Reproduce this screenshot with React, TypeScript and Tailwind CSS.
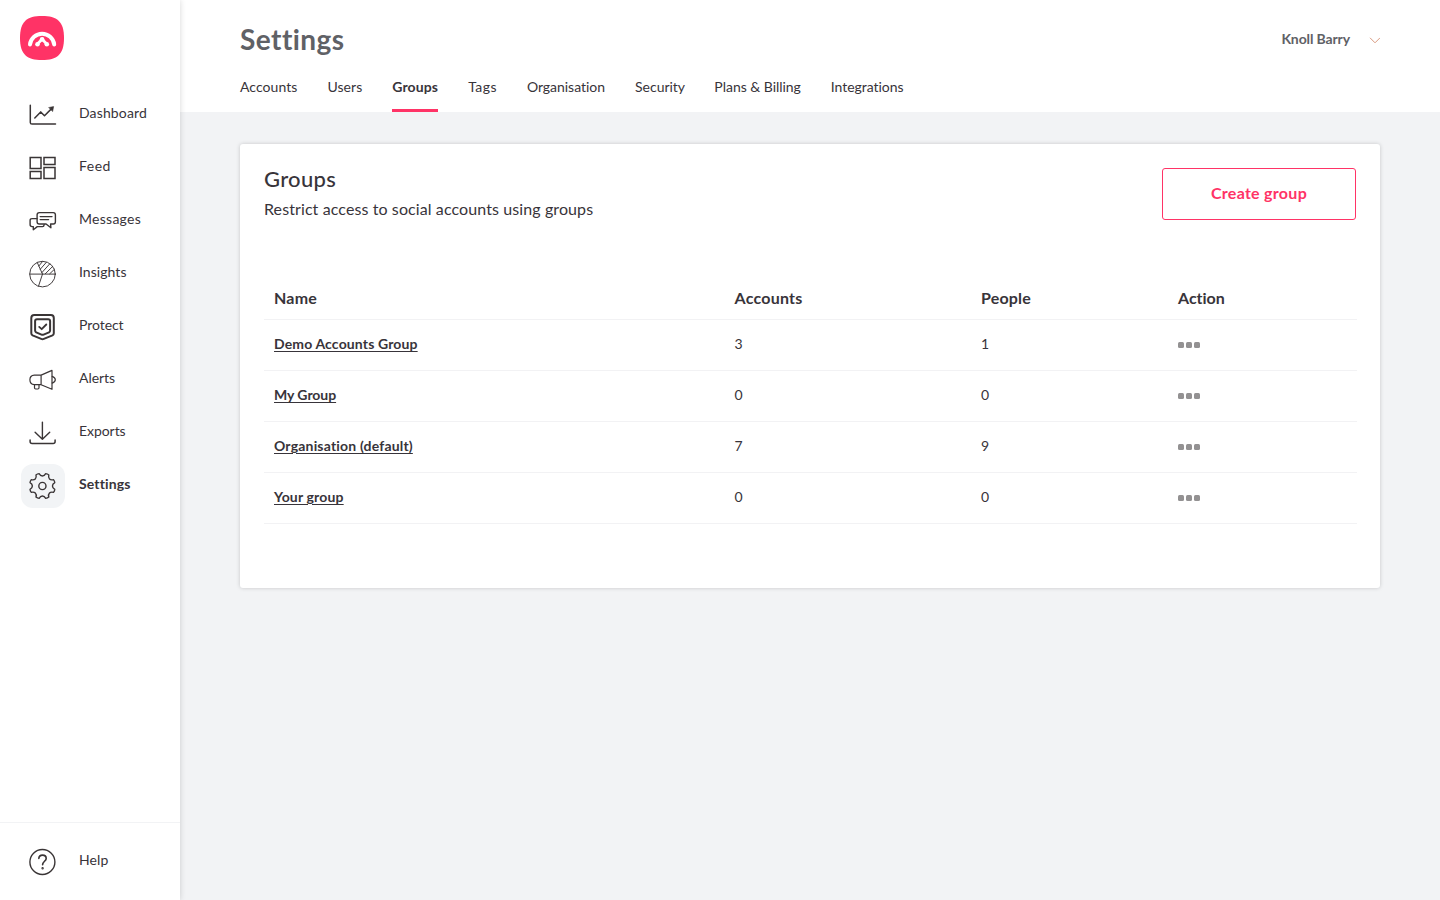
import type { ReactNode } from "react";

type NavItem = { label: string; icon: ReactNode; tracking: string; active?: boolean };
type Group = { name: string; accounts: number; people: number; tracking: string };

function Icon({ children }: { children: ReactNode }) {
  return (
    <svg
      className="mr-px overflow-visible"
      width="27"
      height="27"
      viewBox="-0.3 0.4 27 27"
      fill="none"
      stroke="#3a3536"
      strokeWidth="1.4"
      strokeLinejoin="round"
      strokeLinecap="round"
    >
      {children}
    </svg>
  );
}

function gearPath(cx: number, cy: number) {
  const teeth = 8;
  const points: string[] = [];
  const at = (r: number, deg: number) => {
    const a = (deg * Math.PI) / 180;
    return `${(cx + r * Math.cos(a)).toFixed(2)} ${(cy + r * Math.sin(a)).toFixed(2)}`;
  };
  for (let i = 0; i < teeth; i++) {
    const mid = (i * 360) / teeth + 22.5;
    points.push(`${i === 0 ? "M" : "L"}${at(12.8, mid - 7.5)}`);
    points.push(`Q${at(13.3, mid)} ${at(12.8, mid + 7.5)}`);
    points.push(`C${at(9.4, mid + 13)} ${at(9.4, mid + 32)} ${at(12.8, mid + 37.5)}`);
  }
  return points.join("") + "Z";
}

const navItems: NavItem[] = [
  {
    label: "Dashboard",
    tracking: "tracking-[0.14px]",
    icon: (
      <Icon>
        <path strokeWidth="1.5" d="M1 3.6V20.8Q1 22.5 2.7 22.5H26.2" />
        <path strokeWidth="1.5" d="M5.5 16.4L11.4 10.3L15.2 14.2L22.5 6.8" />
        <path fill="#3a3536" strokeWidth="0.6" d="M19.7 5.9L24.3 5L23.4 9.6Z" />
      </Icon>
    ),
  },
  {
    label: "Feed",
    tracking: "tracking-[0.5px]",
    icon: (
      <Icon>
        <g strokeLinejoin="miter" strokeWidth="1.5">
          <path d="M0.9 3H11.7V14H0.9ZM14.7 3H25.7V10H14.7ZM0.9 17H11.7V24H0.9ZM14.7 13H25.7V24H14.7Z" />
        </g>
      </Icon>
    ),
  },
  {
    label: "Messages",
    tracking: "tracking-[0.27px]",
    icon: (
      <Icon>
        <path d="M10 5H24Q26.1 5 26.1 7.2V14.2Q26.1 16.4 24 16.4H21.3L21.6 20.2L16.8 16.4H10Q7.8 16.4 7.8 14.2V7.2Q7.8 5 10 5Z" />
        <path d="M7.7 11H2.8Q0.8 11 0.8 13V17Q0.8 19 2.8 19H4V22.2L8 19H13.3Q14.6 19 14.9 17" />
        <path d="M10.9 9H22.7M10.9 12H19.3" />
      </Icon>
    ),
  },
  {
    label: "Insights",
    tracking: "tracking-[0.05px]",
    icon: (
      <Icon>
        <g strokeWidth="0.95">
          <circle cx="13.2" cy="13.5" r="12.8" />
          <path d="M0.5 13.5H26M13.2 13.5L9.2 25.6M13.2 13.5L7.9 1.8" />
          <path d="M9.5 5.4L13.2 1M11 8.6L17 1.8M12.6 12L20.5 3.2M16 13.2L23.4 5.8M20.4 13.2L25.2 8.6" />
        </g>
      </Icon>
    ),
  },
  {
    label: "Protect",
    tracking: "tracking-[-0.06px]",
    icon: (
      <Icon>
        <g strokeWidth="2">
          <path d="M5 1.5H21.6Q24.5 1.5 24.5 4.4V19.6Q24.5 21.1 23.2 21.8L14.5 25.3Q13.2 25.8 11.9 25.3L3.3 21.8Q2 21.1 2 19.6V4.4Q2 1.5 5 1.5Z" />
          <path d="M7.7 5.6H18.9Q20.8 5.6 20.8 7.5V16.8Q20.8 18 19.7 18.7L14.3 21Q13.2 21.5 12.2 21L6.9 18.7Q5.8 18 5.8 16.8V7.5Q5.8 5.6 7.7 5.6Z" />
          <path strokeWidth="1.8" d="M9.9 13.3L12.4 15.6L17 10.9" />
        </g>
      </Icon>
    ),
  },
  {
    label: "Alerts",
    tracking: "tracking-[-0.05px]",
    icon: (
      <Icon>
        <g strokeWidth="1.2">
          <path d="M11.8 8.5H5Q0.6 8.8 0.6 13.2Q0.6 17.8 5 18.1H11.8ZM11.8 8.5L22.7 3.8V22.7L11.8 18.1" />
          <path d="M5.2 18.2V21.2Q5.2 22.4 6.4 22.4H8.5Q9.7 22.4 9.7 21.2V18.2M22.9 9.8Q26 11 26 13.2Q26 15.4 22.9 16.5" />
        </g>
      </Icon>
    ),
  },
  {
    label: "Exports",
    tracking: "tracking-[-0.06px]",
    icon: (
      <Icon>
        <path d="M13.1 2.5V19.7M5.8 12.6L13.1 19.7L20.4 12.6" />
        <path strokeWidth="1.5" d="M0.8 20.3V22Q0.8 24 2.8 24H23.8Q25.8 24 25.8 22V20.3" />
      </Icon>
    ),
  },
  {
    label: "Settings",
    tracking: "tracking-[0.13px]",
    active: true,
    icon: (
      <Icon>
        <path d={gearPath(13.1, 13.4)} />
        <circle cx="13.1" cy="13.4" r="3.6" />
      </Icon>
    ),
  },
];

const tabs = [
  { label: "Accounts", size: "w-[57.5px] tracking-[0.06px]" },
  { label: "Users", size: "w-[34.7px] tracking-[0.05px]" },
  { label: "Groups", size: "w-[46px] tracking-[0.13px]", active: true },
  { label: "Tags", size: "w-[28.7px] tracking-[0.45px]" },
  { label: "Organisation", size: "w-[78.2px] tracking-[-0.03px]" },
  { label: "Security", size: "w-[49.3px] tracking-[-0.02px]" },
  { label: "Plans & Billing", size: "w-[86.4px] tracking-[-0.03px]" },
  { label: "Integrations", size: "w-[73px] tracking-[-0.04px]" },
];

const groups: Group[] = [
  { name: "Demo Accounts Group", accounts: 3, people: 1, tracking: "tracking-[0.14px]" },
  { name: "My Group", accounts: 0, people: 0, tracking: "tracking-[-0.05px]" },
  { name: "Organisation (default)", accounts: 7, people: 9, tracking: "tracking-[0.18px]" },
  { name: "Your group", accounts: 0, people: 0, tracking: "tracking-[0.16px]" },
];

function Logo() {
  return (
    <svg width="44" height="44" viewBox="0 0 44 44" fill="none">
      <path
        fill="#ff3366"
        d="M22 0C37 0 44 5.5 44 22S37 44 22 44S0 38.5 0 22S7 0 22 0Z"
      />
      <path
        d="M10 28.4A12.2 12.2 0 0 1 34.2 28.4"
        stroke="#fff"
        strokeWidth="4"
        strokeLinecap="round"
      />
      <path d="M17.4 28L22.1 23.3L26.8 28" stroke="#fff" strokeWidth="2.8" />
      <g fill="#fff">
        <circle cx="17.5" cy="28.3" r="2.3" />
        <circle cx="26.8" cy="28.3" r="2.3" />
        <circle cx="22.1" cy="23.2" r="2.3" />
      </g>
    </svg>
  );
}

function Sidebar() {
  return (
    <aside className="relative z-10 flex h-full w-[180px] shrink-0 flex-col bg-white shadow-[0_0_6px_rgba(0,0,0,0.16)]">
      <div className="pt-4 pl-5">
        <Logo />
      </div>
      <nav className="mt-[33px] flex flex-col gap-[9px] pl-[21px]">
        {navItems.map((item) => (
          <a key={item.label} className="flex h-11 items-center gap-3.5">
            <span
              className={`flex size-11 items-center justify-center rounded-[12px] ${item.active ? "bg-[#f2f4f6]" : ""}`}
            >
              {item.icon}
            </span>
            <span
              className={`-mt-1 text-[14px] leading-5 ${item.tracking} ${item.active ? "font-bold" : ""}`}
            >
              {item.label}
            </span>
          </a>
        ))}
      </nav>
      <div className="mt-auto flex h-[78px] items-center gap-[22px] border-t border-[#f2f3f5] pt-px pl-[29px]">
        <Icon>
          <circle cx="13.1" cy="13.4" r="12.5" />
          <path
            strokeWidth="1.6"
            d="M9.5 9.8C9.7 7.7 11.2 6.5 13.2 6.5C15.3 6.5 16.9 7.8 16.9 9.8C16.9 12.5 13.3 12.9 13.3 16.2"
          />
          <circle cx="13.3" cy="19.6" r="0.5" />
        </Icon>
        <span className="-mt-[5px] text-[14px] leading-5 tracking-[0.12px]">Help</span>
      </div>
    </aside>
  );
}

function Header() {
  return (
    <header className="flex h-[112px] flex-col bg-white px-[60px]">
      <div className="flex items-center justify-between pt-[19px]">
        <h1 className="text-[28px] leading-10 font-bold tracking-[0.45px] text-[#5f6166]">Settings</h1>
        <button className="flex items-center gap-[19px] text-[14px] leading-5 font-bold tracking-[-0.12px] text-[#5f6166]">
          Knoll Barry
          <svg className="mt-0.5" width="11" height="7" viewBox="0 0 11 7" fill="none" stroke="#d99a80">
            <path d="M1 0.8L6 5.8L11 0.8" />
          </svg>
        </button>
      </div>
      <nav className="mt-auto flex gap-[30px]">
        {tabs.map((tab) => (
          <a
            key={tab.label}
            className={`h-[35px] border-b-[3px] text-[14px] leading-5 whitespace-nowrap ${tab.size} ${
              tab.active ? "border-[#ff3366] font-bold" : "border-transparent"
            }`}
          >
            {tab.label}
          </a>
        ))}
      </nav>
    </header>
  );
}

function GroupTable() {
  return (
    <div className="mt-[58px]">
      <div className="grid h-[41px] grid-cols-[460.5px_246.5px_197px_1fr] border-b border-[#f2f2f4] pl-2.5 text-[16px] leading-[38px] font-bold">
        <span className="tracking-[0.2px]">Name</span>
        <span className="tracking-[0.23px]">Accounts</span>
        <span className="tracking-[0.19px]">People</span>
        <span>Action</span>
      </div>
      {groups.map((group) => (
        <div
          key={group.name}
          className="grid h-[51px] grid-cols-[460.5px_246.5px_197px_1fr] items-center border-b border-[#f2f2f4] pb-0.5 pl-2.5 text-[14px] leading-5"
        >
          <a
            className={`font-bold underline decoration-1 underline-offset-2 ${group.tracking}`}
          >
            {group.name}
          </a>
          <span>{group.accounts}</span>
          <span>{group.people}</span>
          <button className="flex gap-0.5 pt-px">
            <i className="size-1.5 rounded-[1.5px] bg-[#939192]" />
            <i className="size-1.5 rounded-[1.5px] bg-[#939192]" />
            <i className="size-1.5 rounded-[1.5px] bg-[#939192]" />
          </button>
        </div>
      ))}
    </div>
  );
}

export default function App() {
  return (
    <div className="flex h-[900px] w-[1440px] overflow-hidden bg-[#f2f3f5] font-['Lato',sans-serif] text-[#38343a] [font-variant-ligatures:none]">
      <Sidebar />
      <div className="flex flex-1 flex-col">
        <Header />
        <main className="px-[60px] pt-8">
          <section className="h-[444px] rounded-[3px] bg-white pt-[23px] pr-[23px] pl-6 shadow-[0_0_4px_rgba(0,0,0,0.18)]">
            <div className="flex justify-between pr-px">
              <div>
                <h2 className="text-[22px] leading-6 font-medium tracking-[0.3px]">Groups</h2>
                <p className="mt-1.5 text-[16px] leading-6 tracking-[0.1px]">
                  Restrict access to social accounts using groups
                </p>
              </div>
              <button className="mt-px h-[52px] w-[194px] rounded-[3px] border border-[#ff3366] pb-0.5 text-[16px] font-bold tracking-[0.28px] text-[#ff3366]">
                Create group
              </button>
            </div>
            <GroupTable />
          </section>
        </main>
      </div>
    </div>
  );
}
